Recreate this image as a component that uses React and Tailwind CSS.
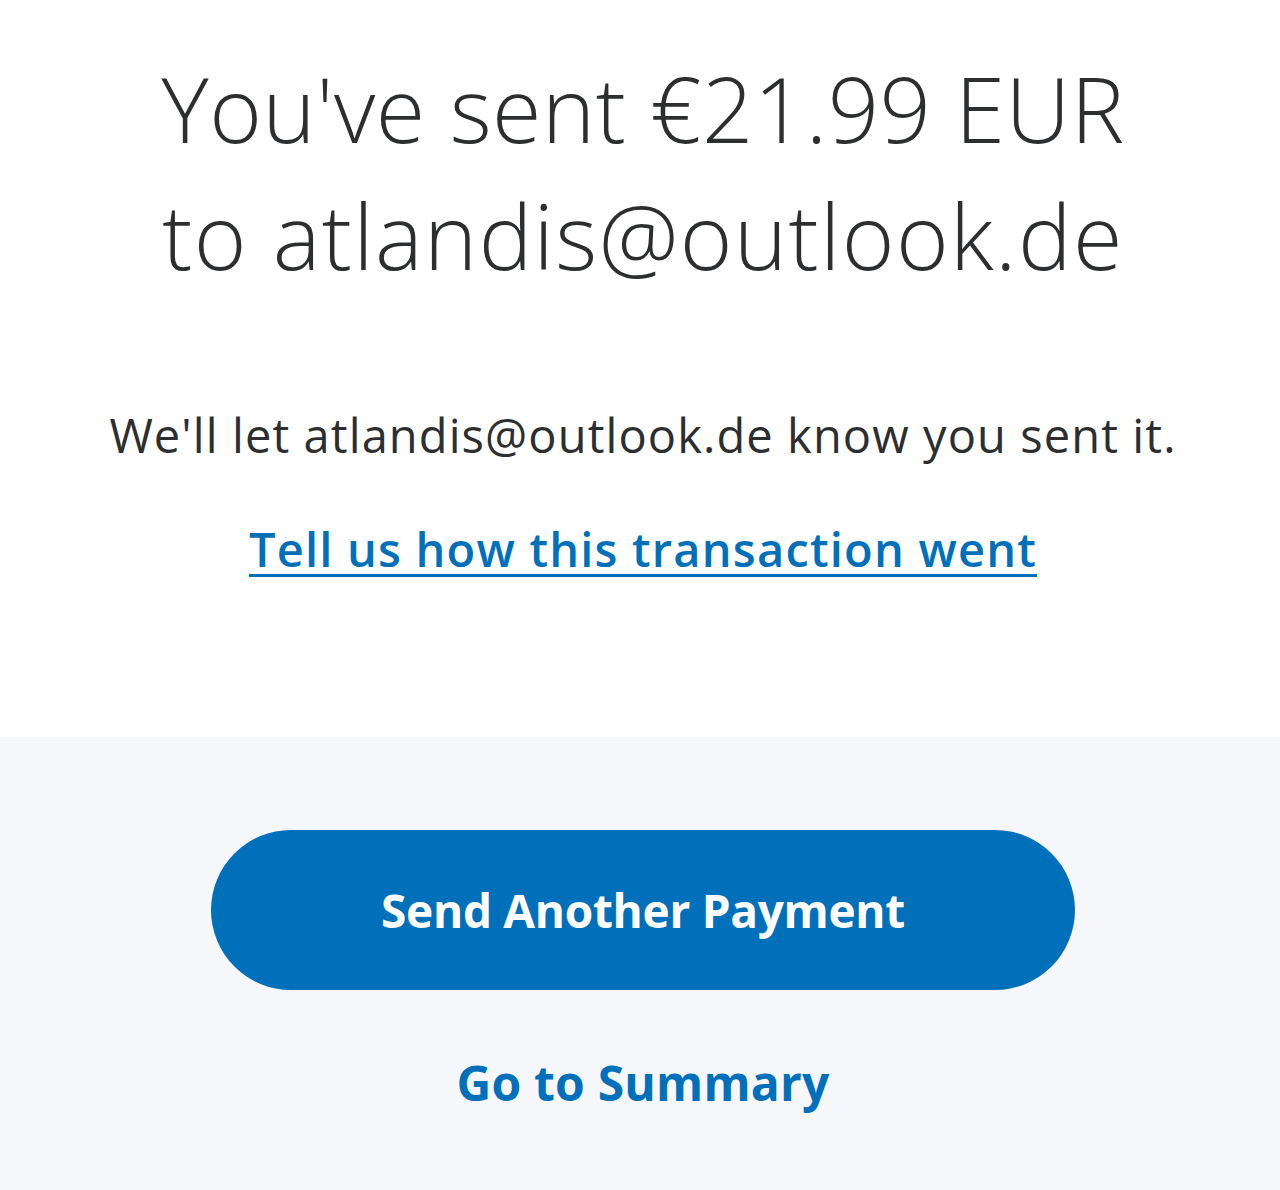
import React from 'react';

export default function App() {
  return (
    <div className="w-[1280px] h-[1190px] flex flex-col font-['Open_Sans',sans-serif] text-[#2c2e2f]">
      {/* ── Confirmation ───────────────────────── */}
      <section className="h-[737px] bg-white flex flex-col items-center pt-[45px] pl-[6px]">
        <h1 className="text-[90px] leading-[127px] font-light text-center tracking-[0.5px]">
          You've sent €21.99 EUR
          <br />
          <span className="tracking-[1.4px]">to atlandis@outlook.de</span>
        </h1>
        <p className="mt-[106px] text-[47px] leading-[60px] tracking-[1.1px]">
          We'll let atlandis@outlook.de know you sent it.
        </p>
        <a
          href="#"
          className="mt-[54px] text-[47px] leading-[60px] font-semibold tracking-[1.2px] text-[#0070ba] underline underline-offset-[7px] decoration-[3px]"
        >
          Tell us how this transaction went
        </a>
      </section>

      {/* ── Actions ────────────────────────────── */}
      <section className="flex-1 bg-[#f5f7fa] flex flex-col items-center pt-[93px] pl-[6px]">
        <button className="w-[864px] h-[160px] rounded-full bg-[#0070ba] text-white text-[46px] font-bold tracking-[-0.3px]">
          Send Another Payment
        </button>
        <a href="#" className="mt-[63px] text-[48px] leading-[60px] font-bold tracking-[0.2px] text-[#0070ba]">
          Go to Summary
        </a>
      </section>
    </div>
  );
}
